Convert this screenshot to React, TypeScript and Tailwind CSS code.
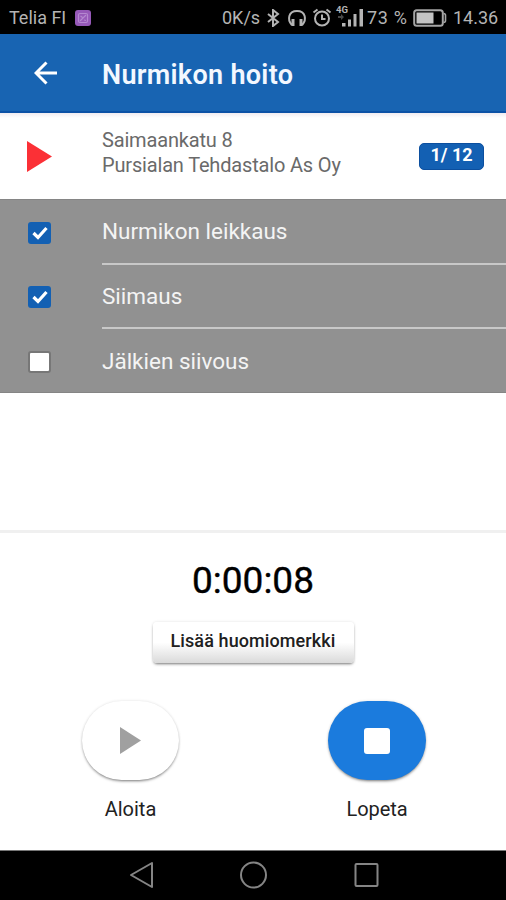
import React from 'react';

interface Task {
  label: string;
  done: boolean;
}

const tasks: Task[] = [
  { label: 'Nurmikon leikkaus', done: true },
  { label: 'Siimaus', done: true },
  { label: 'Jälkien siivous', done: false },
];

const StatusBar: React.FC = () => (
  <div className="flex h-[34px] items-center bg-black pt-[2px] pl-[9px] text-[18px] leading-none whitespace-nowrap text-[#b4b4b4]">
    <span className="w-[66px]">Telia FI</span>
    <svg className="h-4 w-4" viewBox="0 0 16 16" fill="none">
      <rect width="16" height="16" rx="3" fill="#9659b8" />
      <rect x="3.5" y="3.5" width="9" height="9" rx="1.5" stroke="#b588d0" strokeWidth="1.2" />
      <path d="M5 11l6-6M5.5 6l2 1.5M9 10l2 .5" stroke="#b588d0" strokeWidth="1.2" />
    </svg>
    <span className="ml-[131px] w-[44px]">0K/s</span>
    <svg className="h-[18px] w-[15px]" viewBox="0 0 15 18" fill="none" stroke="currentColor" strokeWidth="2">
      <path d="M2 5l10 8-5 4V1l5 4-10 8" />
    </svg>
    <svg className="ml-[6px] h-[18px] w-[20px]" viewBox="0 0 20 18" fill="none" stroke="currentColor" strokeWidth="2">
      <path d="M6 15.5H4.5C.5 11 1 2 10 2s9.500 9 5.500 13.500H14" />
      <path d="M6 10v7M14 10v7" strokeWidth="3" />
    </svg>
    <svg className="mt-[-2px] ml-[5px] h-[19px] w-[20px]" viewBox="0 0 20 19" fill="none" stroke="currentColor" strokeWidth="2">
      <circle cx="10" cy="10.500" r="7" />
      <path d="M10 6.500v4.500h3.500M1.500 4.500l4-3M18.500 4.500l-4-3" />
    </svg>
    <svg className="mt-[-5px] ml-[3px] h-[24px] w-[30px]" viewBox="0 0 30 24" fill="currentColor">
      <text x="1" y="8.500" fontSize="9" fontWeight="700" textLength="12" lengthAdjust="spacingAndGlyphs">4G</text>
      <path d="M3 12h3v-2l3 3-3 3v-2H3z" fill="#484848" />
      <path d="M7 19h3.500v3.500H7zM13 15.500h3v7h-3zM18.500 10h3v12.500h-3zM24.500 5h3.500v17.500h-3.500z" />
    </svg>
    <span className="ml-[2px] w-[46px] tracking-[0.7px]">73 %</span>
    <svg className="h-[18px] w-[34px]" viewBox="0 0 34 18" fill="none">
      <rect x="1.200" y="1.200" width="28.600" height="15.600" rx="2.500" stroke="#a5a5a5" strokeWidth="2" />
      <rect x="3.500" y="3.500" width="17" height="11" fill="#c4c4c4" />
      <path d="M30.500 4.500q2 0 2 2v5q0 2-2 2" stroke="#a5a5a5" strokeWidth="1.600" />
    </svg>
    <span className="ml-[6px]">14.36</span>
  </div>
);

const Header: React.FC = () => (
  <header className="flex h-[79px] items-center border-b-2 border-[#0c52a6] bg-[#1864b2] pl-[34px]">
    <svg className="mt-px mr-[44px] h-6 w-6" viewBox="0 0 24 24" fill="none" stroke="white" strokeWidth="3">
      <path d="M23 12H2M12.500 1.500L2 12l10.500 10.500" />
    </svg>
    <h1 className="mt-[5px] text-[27px] leading-none font-semibold tracking-[0.3px] text-[#f3f8ff]">
      Nurmikon hoito
    </h1>
  </header>
);

const Checkbox: React.FC<{ checked: boolean }> = ({ checked }) =>
  checked ? (
    <div className="flex h-[22px] w-[23px] items-center justify-center rounded-[3px] bg-[#1360b3]">
      <svg className="h-[14px] w-[16px]" viewBox="0 0 16 14" fill="none" stroke="white" strokeWidth="3.200">
        <path d="M1.500 7l4.500 4.500L14.500 2" />
      </svg>
    </div>
  ) : (
    <div className="h-[22px] w-[23px] rounded-[3px] border-2 border-[#777] bg-white" />
  );

const TaskList: React.FC = () => (
  <ul className="h-[194px] border-t border-b border-[#858585] bg-[#919191]">
    {tasks.map((task, i) => (
      <li key={task.label} className="flex h-[64.500px] items-stretch pl-[28px]">
        <div className="flex w-[74px] items-center pt-px">
          <Checkbox checked={task.done} />
        </div>
        <div
          className={`flex flex-1 items-center pt-[2px] text-[22.500px] text-[#f4f4f4] ${
            i < tasks.length - 1 ? 'border-b-2 border-[#c8c8c8]' : ''
          }`}
        >
          {task.label}
        </div>
      </li>
    ))}
  </ul>
);

const App: React.FC = () => {
  return (
    <div className="flex h-[900px] w-[506px] flex-col overflow-hidden bg-white font-['Roboto','Liberation_Sans',sans-serif]">
      <StatusBar />
      <Header />

      <section className="flex h-[86px] items-center bg-gradient-to-b from-[#f1ecf1] to-white to-[5px] pl-[27px]">
        <svg className="mr-[50px] h-[31px] w-[25px]" viewBox="0 0 25 31">
          <path d="M0 0l25 15.500L0 31z" fill="#fb3036" />
        </svg>
        <div className="mb-[7px] w-[317px] text-[20px] leading-[25px] tracking-[-0.17px] text-[#6a6a6a]">
          <p>Saimaankatu 8</p>
          <p>Pursialan Tehdastalo As Oy</p>
        </div>
        <span className="flex h-[27px] w-[65px] items-center justify-center rounded-[5px] border border-[#0c4f9f] bg-[#1360b3] pb-[3px] text-[18px] font-bold text-white">
          1/ 12
        </span>
      </section>

      <TaskList />

      <section className="mt-[137px] flex h-[320px] flex-col items-center border-t-[3px] border-[#f0f0f0]">
        <div className="mt-[28px] text-[37px] leading-[40px] text-black [-webkit-text-stroke:0.4px_black]">0:00:08</div>
        <button className="mt-[21px] h-[41px] w-[201px] rounded-[4px] bg-gradient-to-b from-white from-50% to-[#dadada] pb-[4px] text-[18px] font-medium tracking-[0.1px] text-[#202020] shadow-[0_2px_3px_-1px_rgba(0,0,0,0.5),0_0_3px_rgba(0,0,0,0.12)]">
          Lisää huomiomerkki
        </button>

        <div className="mt-[38px] flex w-full pl-[82px] text-[20px] leading-6 text-[#222]">
          <div className="flex w-[97px] flex-col items-center gap-[17px]">
            <button className="flex h-[79px] w-[97px] items-center justify-center rounded-[40px] bg-white shadow-[0_2px_3px_-1px_rgba(0,0,0,0.5),0_0_3px_rgba(0,0,0,0.12)]">
              <svg className="h-[27px] w-[21px]" viewBox="0 0 21 27">
                <path d="M0 0l21 13.500L0 27z" fill="#a0a0a0" />
              </svg>
            </button>
            <span>Aloita</span>
          </div>
          <div className="ml-[149px] flex w-[98px] flex-col items-center gap-[17px]">
            <button className="flex h-[79px] w-[98px] items-center justify-center rounded-[40px] bg-[#1b7bdd] shadow-[0_2px_3px_-1px_rgba(0,0,0,0.5),0_0_3px_rgba(0,0,0,0.12)]">
              <span className="h-[26px] w-[26px] rounded-[3px] bg-white" />
            </button>
            <span className="tracking-[-0.1px]">Lopeta</span>
          </div>
        </div>
      </section>

      <nav className="flex h-[50px] items-center border-t border-[#777] bg-black pl-[129px]">
        <svg className="mb-px h-[28px] w-[250px]" viewBox="0 0 250 28" fill="none" stroke="#858585" strokeWidth="2" strokeLinejoin="round">
          <path d="M23 2v24L2 14z" />
          <circle cx="124.500" cy="14" r="12.500" />
          <rect x="226.500" y="3" width="22" height="22" rx="1" />
        </svg>
      </nav>
    </div>
  );
};

export default App;
